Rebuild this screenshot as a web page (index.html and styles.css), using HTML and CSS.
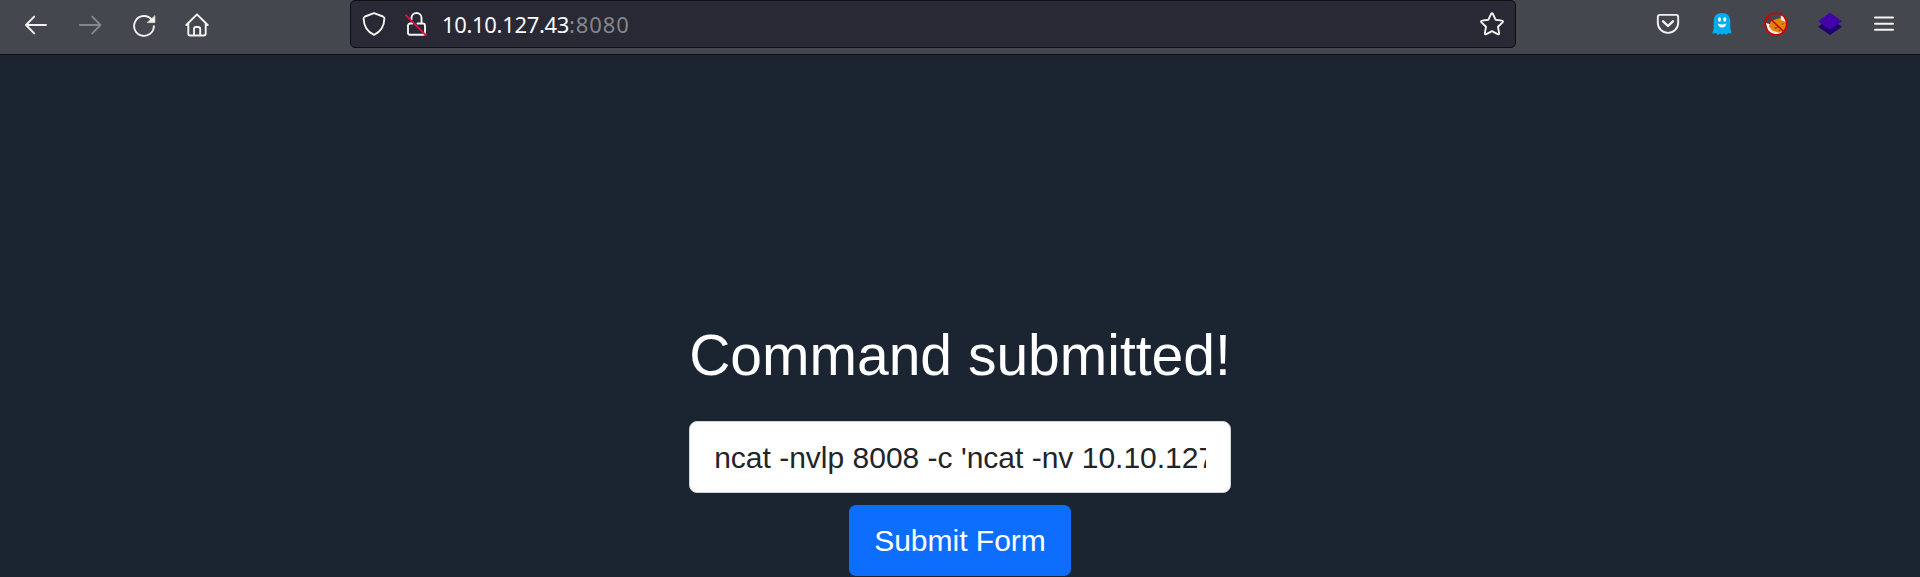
FILE: index.html
```html
<!DOCTYPE html>
<html lang="en">
<head>
<meta charset="utf-8">
<title>Command submitted</title>
<link rel="stylesheet" href="styles.css">
</head>
<body>
<header class="toolbar">
  <nav class="nav">
    <svg class="icon" viewBox="0 0 24 24"><path d="M22 12H2M10.2 3.6L2 12l8.200 8.400"/></svg>
    <svg class="icon dim" viewBox="0 0 24 24"><path d="M2 12H22.500M14.300 3.600L22.500 12l-8.200 8.400"/></svg>
    <svg class="icon" viewBox="0 0 24 24"><path d="M21.900 13.200A9.900 9.900 0 1 1 19.600 6.600"/><path class="fill" d="M22.900 3v6.600h-7.400z"/></svg>
    <svg class="icon home" viewBox="0 0 24 24"><path d="M1.300 12L12 1.300 22.700 12M3.300 10.300v10.200a2 2 0 0 0 2 2h13.400a2 2 0 0 0 2-2V10.300M9 22.500v-6.500a2 2 0 0 1 2-2h2.200a2 2 0 0 1 2 2v6.500"/></svg>
  </nav>
  <div class="address">
    <svg class="icon shield" viewBox="0 0 24 24"><path d="M12 1.200L21 4.500q1.400.6 1.400 2C22.200 14.500 18.500 19.800 12 22.900 5.500 19.800 1.800 14.500 1.600 6.500q0-1.400 1.400-2z"/></svg>
    <svg class="icon lock" viewBox="0 0 24 24"><path d="M7.500 7.500V6a5 5 0 0 1 10 0v5.500M13.500 11.500H19a2 2 0 0 1 2 2v7.200a2 2 0 0 1-2 2H6a2 2 0 0 1-2-2v-7.200a2 2 0 0 1 2-2h2.500"/><path class="slash" d="M2 3.300L22 23.300"/></svg>
    <span class="url">10.10.127.43<span class="port">:8080</span></span>
    <svg class="icon star" viewBox="0 0 24 24"><path d="M11 2.100q1-1.600 2 0l2.700 5.700 6.200.8q1.800.4.600 1.800l-4.500 4.400 1.100 6.300q.1 1.800-1.500 1.100L12 19.200l-5.600 3q-1.600.7-1.500-1.100L6 14.800l-4.500-4.400q-1.200-1.400.6-1.800l6.200-.8z"/></svg>
  </div>
  <div class="extensions">
    <svg class="icon" viewBox="0 0 24 24"><path d="M3.800 2.900h16.400a2 2 0 0 1 2 2v5.800a10.200 10.200 0 0 1-20.400 0V4.900a2 2 0 0 1 2-2z"/><path class="bold" d="M7.100 9.300l4.900 4.700 4.900-4.700"/></svg>
    <svg class="icon" viewBox="0 0 24 24"><g class="ghost"><path d="M12 1C6.500 1 3.800 4.500 3.700 9v7.500L2.400 21.300q2.200.4 3.500-.3l1.800 2 2.600-1.600L12 23l1.800-1.600 2.600 1.600 1.800-2q1.300.7 3.500.3L20.300 16.500V9C20.200 4.500 17.500 1 12 1z"/></g><g class="face"><ellipse cx="9.500" cy="7.500" rx="1.500" ry="2.300"/><ellipse cx="14.700" cy="7.500" rx="1.500" ry="2.300"/><path d="M7.700 11.500q4.400 2 8.800 0-1 4-4.400 4t-4.400-4z"/></g></svg>
    <svg class="icon" viewBox="0 0 24 24"><g class="fox"><path class="cream" d="M1.800 11l4.500 1.200 1.200 3 8 4.500 4-1-3.500 3.300H8L4 18z"/><path class="orange" d="M4.800 14L7.600 8.800l5-1.800 3.600-1L21 8.500l1 5-2.300 5-4.700 2.300-7-2.300z"/><path class="cream" d="M16.800 3.500l2.500.8 2.800 6-5.200-2.300z"/><path class="brown" d="M10 15.800l3-.8.8 1-2.300 1zM17.500 12.200l2.100-1.200-.4 1.800zM14 18.500l2-.8-.6 1.500z"/></g><circle class="ban" cx="12" cy="12" r="11"/><path class="ban" d="M4 4.500l16 15.500"/></svg>
    <svg class="icon" viewBox="0 0 24 24"><path class="layer-low" d="M0 14.800L12 6.800l12 8-12 8.300z"/><path class="layer-top" d="M0 9.300L12 .8l12 8.500-12 8.200z"/></svg>
    <svg class="icon menu" viewBox="0 0 24 24"><path d="M3 5.500h18M3 11.700h18M3 17.700h18"/></svg>
  </div>
</header>
<main class="page">
  <form class="form">
    <h1 class="title">Command submitted!</h1>
    <input class="command" type="text" size="1" aria-label="Command" value="ncat -nvlp 8008 -c 'ncat -nv 10.10.127.43 8080'">
    <button class="submit" type="button">Submit Form</button>
  </form>
</main>
</body>
</html>
```
FILE: styles.css
```css
* { box-sizing: border-box; }
body {
  margin: 0;
  height: 577px;
  overflow: hidden;
  background: #1b2431;
  font-family: "Liberation Sans", Arial, sans-serif;
}
.toolbar {
  display: flex;
  align-items: flex-start;
  height: 55px;
  background: #45474e;
  border-bottom: 1px solid #0e0f13;
}
.icon {
  display: block;
  flex: none;
  width: 24px;
  height: 24px;
  fill: none;
  stroke: #f3f3f1;
  stroke-width: 1.9;
  stroke-linecap: round;
  stroke-linejoin: round;
}
.dim { stroke: #86878b; }
.home { margin-left: -1px; }
.fill { fill: #f3f3f1; stroke-width: .6; }
.bold { stroke-width: 2.4; }
.slash { stroke: #f00c43; stroke-width: 1.8; }
.nav {
  display: flex;
  gap: 30px;
  width: 350px;
  padding: 13px 0 0 24px;
}
.address {
  display: flex;
  align-items: center;
  width: 1166px;
  height: 48px;
  padding: 0 11px;
  background: #282934;
  border: 1px solid #0e0f13;
  border-radius: 5px;
}
.lock { margin-left: 18px; }
.url {
  flex: 1;
  margin-left: 14px;
  color: #fbfbfe;
  font: 22px/30px "Noto Sans", sans-serif;
  letter-spacing: -.33px;
}
.port {
  color: #85868d;
  letter-spacing: .9px;
}
.extensions {
  display: flex;
  gap: 30px;
  padding: 12px 0 0 140px;
}
.ghost { fill: #00aef0; stroke: none; }
.face { fill: #fff; stroke: none; }
.fox { stroke: none; }
.cream { fill: #f4eee6; }
.orange { fill: #e58309; }
.brown { fill: #7b481c; }
.ban { stroke: #c90606; stroke-width: 1.7; }
.layer-low { fill: #20006f; stroke: none; }
.layer-top { fill: #4204aa; stroke: none; }
.menu { stroke-width: 2; }
.page {
  display: flex;
  justify-content: center;
  padding-top: 266px;
}
.form {
  display: flex;
  flex-direction: column;
  align-items: center;
}
.title {
  margin: 0 0 32px;
  color: #fff;
  font-size: 57px;
  font-weight: 400;
  line-height: 68px;
  white-space: nowrap;
}
.command {
  width: 100%;
  height: 72px;
  padding: 13px 24px 11px;
  color: #212529;
  background: #fff;
  border: 1px solid #ced4da;
  border-radius: 8px;
  font: 30px/45px "Liberation Sans", Arial, sans-serif;
}
.submit {
  height: 71px;
  margin-top: 12px;
  padding: 0 25px;
  color: #fff;
  background: #0d6efd;
  border: 0;
  border-radius: 7px;
  font: 30px/45px "Liberation Sans", Arial, sans-serif;
}
```
